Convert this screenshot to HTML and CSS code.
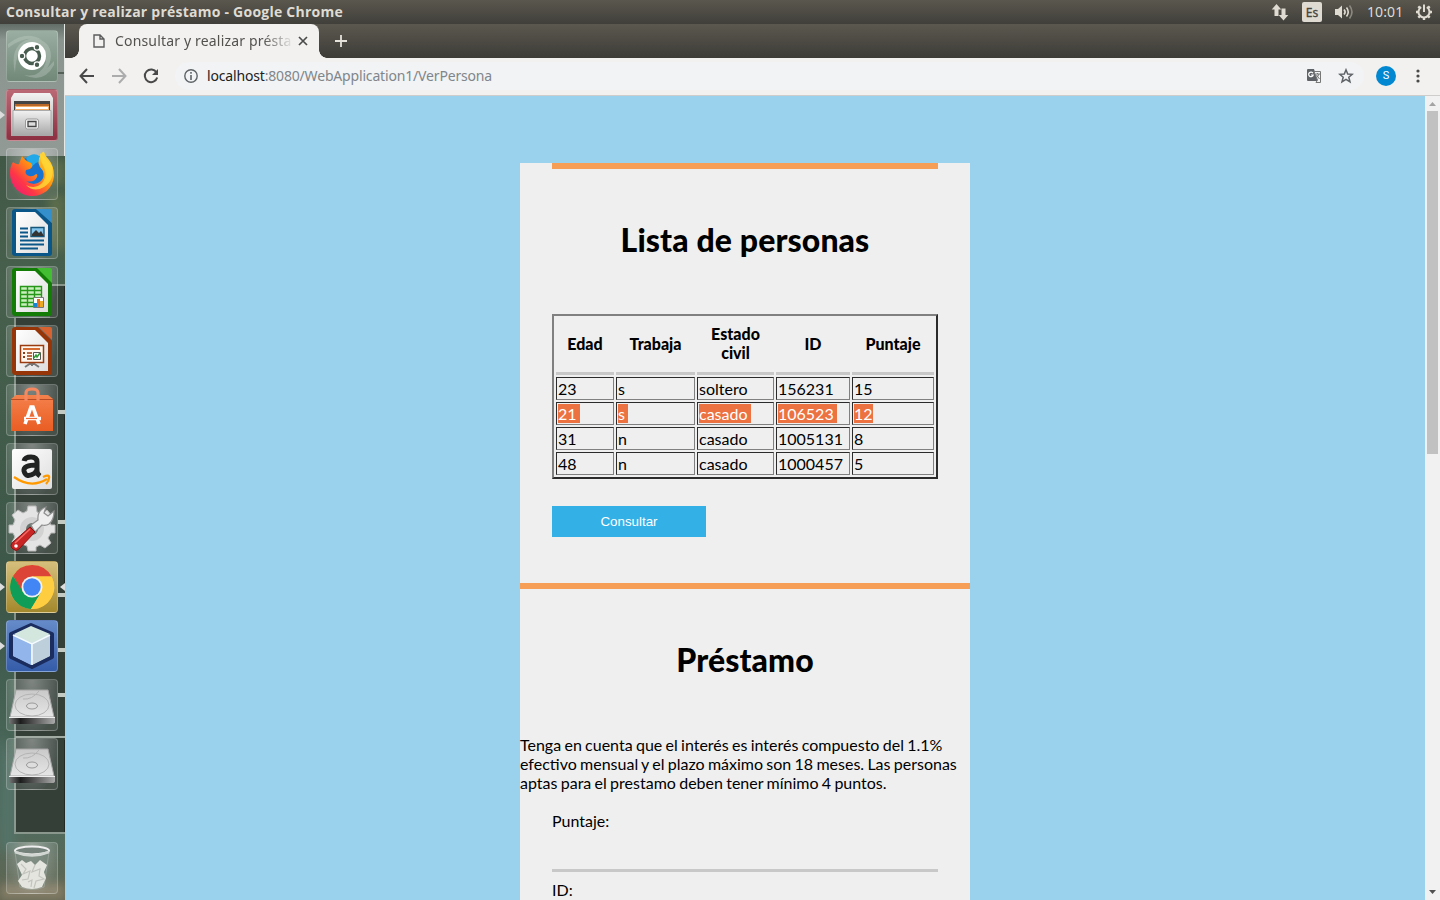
FILE: index.html
```html
<!DOCTYPE html>
<html lang="es">
<head>
<meta charset="utf-8">
<title>Consultar y realizar préstamo</title>
<link rel="stylesheet" href="styles.css">
</head>
<body>
<div class="desktop">
  <header class="panel">
    <span class="panel-title">Consultar y realizar préstamo - Google Chrome</span>
    <div class="indicators">
      <svg class="ind-net" width="18" height="18" viewBox="0 0 18 18"><path d="M5.500 1L10.300 6.500H7.500V13H3.500V6.500H.7ZM12.500 17.500L7.700 12H10.500V5.500H14.500V12H17.300Z"/></svg>
      <span class="lang">Es</span>
      <svg class="ind-sound" width="20" height="18" viewBox="0 0 20 18"><path d="M1 6H4L8 2.500V15.500L4 12H1Z"/><g fill="none" stroke="#dfdbd2" stroke-width="1.600"><path d="M10 6.500Q12.300 9 10 11.500M12.500 4.500Q16 9 12.500 13.500"/><path stroke="#8c8981" d="M15.500 2.500Q20.500 9 15.500 15.500"/></g></svg>
      <span class="clock">10:01</span>
      <svg class="ind-gear" width="18" height="18" viewBox="0 0 18 18"><g fill="none" stroke="#dfdbd2"><path stroke-width="2" d="M6.200 4.200A5.500 5.500 0 1 0 11.800 4.200M9 1.500V9"/><path stroke-width="2.400" d="M1 9H3.500M14.500 9H17M9 14.500V17M3.300 3.300L5 5M14.700 3.300L13 5M3.300 14.700L5 13M14.700 14.700L13 13"/></g></svg>
    </div>
  </header>
  <div class="workspace">
    <aside class="launcher">
      <svg class="wallpaper" width="65" height="876" viewBox="0 24 65 876">
        <defs>
          <linearGradient id="wall" x2="0" y2="1"><stop stop-color="#3d5041"/><stop offset=".3" stop-color="#47604d"/><stop offset=".65" stop-color="#3c5648"/><stop offset=".9" stop-color="#4d6c5f"/><stop offset="1" stop-color="#626552"/></linearGradient>
          <linearGradient id="fog" x2="0" y2="1"><stop stop-color="#626d67"/><stop offset=".12" stop-color="#8b958f"/><stop offset="1" stop-color="#929a96"/></linearGradient>
          <linearGradient id="paper" x2="1" y2="1"><stop stop-color="#fff"/><stop offset="1" stop-color="#dedede"/></linearGradient>
          <linearGradient id="steel" x2="0" y2="1"><stop stop-color="#f2f2f2"/><stop offset="1" stop-color="#a8a8a8"/></linearGradient>
          <linearGradient id="disk" x2="0" y2="1"><stop stop-color="#c9c9c9"/><stop offset="1" stop-color="#e6e6e6"/></linearGradient>
          <linearGradient id="base" x2="1"><stop stop-color="#777"/><stop offset=".25" stop-color="#1d1d1d"/><stop offset="1" stop-color="#aaa"/></linearGradient>
          <linearGradient id="fire" x1="1" x2="0" y2="1"><stop stop-color="#fff44f"/><stop offset=".4" stop-color="#ff980e"/><stop offset=".7" stop-color="#ff3647"/><stop offset="1" stop-color="#e31587"/></linearGradient>
          <linearGradient id="bag" x2="0" y2="1"><stop stop-color="#f5814c"/><stop offset="1" stop-color="#e95d23"/></linearGradient>
          <filter id="soft" x="-30%" y="-30%" width="160%" height="160%"><feGaussianBlur stdDeviation="4"/></filter>
        </defs>
        <path fill="url(#wall)" d="M0 24H65V900H0Z"/>
        <g filter="url(#soft)"><path fill="#5b6d4b" d="M25 160H65V185H40ZM48 195H65V250H50Z"/><path fill="#557267" d="M0 735L16 770V850H0Z"/><path fill="#827b65" d="M0 884H65V900H0Z"/></g>
        <path fill="#343f38" d="M16 318H65V832H16ZM50 286H65V320H50Z"/>
        <path fill="url(#fog)" d="M0 24H64V156H0Z"/>
        <g fill="none" stroke="#a1aba3" stroke-width="2"><path d="M15 318V833H65M50 285H65" opacity=".7"/><path d="M15 737H65"/><path stroke="#c3c9c3" stroke-width="4" d="M58 412H65M58 522H65M58 595H65M58 650H65M58 695H65"/></g>
        <path stroke="#e5e8e4" d="M64.500 24V156"/>
        <path stroke="#222a25" d="M64.500 286V409M64.500 415V519M64.500 550V590M64.500 740V832"/>
        <path stroke="#536159" stroke-width="2" d="M58 73H64"/>
        <path fill="#ddd" d="M0 111L5 115L0 119ZM0 583L5 587L0 591ZM0 642L5 646L0 650ZM65 583L60 587L65 591Z"/>
      </svg>
      <div class="apps">
        <div class="tile ubuntu"><svg viewBox="0 0 52 52"><g fill="#c5d2c9" opacity=".35"><path d="M9 43Q2 12 28 8Q45 11 45 26Q44 42 29 45Q42 38 40 24Q36 12 26 12Q10 15 9 43ZM2 14Q20 0 36 10Q20 5 2 18ZM48 35Q38 54 18 45Q34 48 48 31Z"/></g><circle cx="26" cy="26" r="14" fill="#fff"/><circle cx="26" cy="26" r="7.500" fill="none" stroke="#475b4e" stroke-width="3.500"/><g fill="#475b4e" stroke="#fff" stroke-width="1.200"><circle cx="16" cy="26" r="2.800"/><circle cx="31" cy="17.300" r="2.800"/><circle cx="31" cy="34.700" r="2.800"/></g></svg></div>
        <div class="tile files"><svg viewBox="0 0 52 52"><path fill="url(#steel)" d="M8 4H44L47 9V47H5V9Z"/><path fill="#444" d="M8 12H44V21H8Z"/><path fill="#ba672a" d="M9 15H43V21H9Z"/><path fill="#f3ae69" d="M9 17H43V21H9Z"/><path fill="#fff" d="M10 18H42V20H10Z"/><path fill="url(#steel)" stroke="#aaa" d="M7 21.500H45V46H7Z"/><rect x="19.500" y="30" width="13" height="10" rx="2" fill="#f3f3f3" stroke="#999"/><path fill="#ddd" stroke="#444" stroke-width="1.300" d="M22 32.500H30V37.500H22Z"/></svg></div>
        <div class="tile firefox"><svg viewBox="0 0 52 52"><circle cx="28" cy="25" r="17" fill="#1774d1"/><path fill="#20a8e9" d="M20 10Q31 1 38 14Q31 12 25 20Z"/><path fill="url(#fire)" d="M7 14Q11 17 13 16L16 8Q19 13 25 15Q28 18 24 21L20 22Q18 26 23 28Q27 29 30 26Q32 26 31 29Q28 35 20 33Q28 39 35 33Q39 29 37 23Q29 15 35 6Q37 3 38 4Q39 8 43 12Q48 18 48 28C47 41 37 48 26 48C14 48 4 38 4 25Q4 18 7 14Z"/><path fill="#ffda37" d="M34 5Q34 12 37 17Q42 26 37 34Q30 42 20 37Q28 45 38 39Q49 32 46 18L38 9Z" opacity=".8"/></svg></div>
        <div class="tile"><svg viewBox="0 0 52 52"><path fill="#0b5688" d="M9 2H32L46 16V46Q46 49 43 49H9Q6 49 6 46V5Q6 2 9 2Z"/><path fill="#348fca" d="M30 2H44Q46 2 46 4V16Z"/><path fill="url(#paper)" d="M10 5H29L42 18V46H10Z"/><path stroke="#0b5688" stroke-width="2" d="M14 21.500H22M14 25.500H22M14 29.500H22M14 33.500H38M14 37.500H38M14 41.500H32"/><path fill="#83c5ed" stroke="#175579" stroke-width="1.400" d="M25 20.500H38V29.500H25Z"/><path fill="#333" d="M26 29V27L30 23L33 26L35 24L38 29Z"/></svg></div>
        <div class="tile"><svg viewBox="0 0 52 52"><path fill="#127c06" d="M9 2H32L46 16V46Q46 50 43 50H9Q6 50 6 46V5Q6 2 9 2Z"/><path fill="#43bd32" d="M31 2H44Q46 2 46 4V17Z"/><path fill="url(#paper)" d="M10 5H29L42 18V46H10Z"/><path fill="#c9efbd" stroke="#279719" stroke-width="1.400" d="M14.500 20.500H35.500V40.500H14.500ZM14.500 24.500H35.500M14.500 28.500H35.500M14.500 32.500H35.500M14.500 36.500H35.500M21.500 20.500V40.500M28.500 20.500V40.500"/><path fill="#fff" stroke="#777" d="M27.500 31.500H37.500V41.500H27.500Z"/><path fill="#1684d5" d="M28 37H31V41H28Z"/><path fill="#ee6c14" d="M31 33H34V41H31Z"/><path fill="#eaaa24" d="M34 35H37V41H34Z"/></svg></div>
        <div class="tile"><svg viewBox="0 0 52 52"><path fill="#963508" d="M9 2H32L46 16V46Q46 50 43 50H9Q6 50 6 46V5Q6 2 9 2Z"/><path fill="#d86330" d="M33 2H44Q46 2 46 4V15Z"/><path fill="url(#paper)" d="M10 5H29L42 18V46H10Z"/><path stroke="#777" stroke-width="2" fill="none" d="M26 37V41M25 38L19 42M27 38L33 42"/><path fill="#fff7ed" stroke="#9a3c11" stroke-width="1.500" d="M14.500 20.500H37.500V37.500H14.500Z"/><path stroke="#d66b31" stroke-width="2" d="M17 24H34"/><path stroke="#8b3c17" stroke-width="2" stroke-dasharray="2 2" d="M18 27V35"/><path stroke="#9a3c11" stroke-width="1.500" d="M21 28H26M21 31H26M21 34H26"/><path fill="#fff" stroke="#555" d="M27.500 27.500H34.500V34.500H27.500Z"/><path fill="none" stroke="#319737" stroke-width="1.500" d="M28 33L30 30L31 32L34 28"/></svg></div>
        <div class="tile"><svg viewBox="0 0 52 52"><path fill="url(#bag)" d="M5 15L10 11H42L47 15V47H5Z"/><path stroke="#b84b23" d="M5 15.500H47"/><path fill="none" stroke="#f6885f" stroke-width="3.200" d="M20 17V9Q20 5 26 5Q32 5 32 9V17"/><g fill="none" stroke="#fff" stroke-width="3.600"><path d="M19 40L25 23H27L33 40"/><path stroke-width="3.500" d="M18 34.500H35"/><path stroke="#ed6c38" stroke-width="1.200" d="M20 34.500H31"/></g></svg></div>
        <div class="tile"><svg viewBox="0 0 52 52"><rect x="6" y="6" width="40" height="40" rx="2" fill="url(#paper)"/><path fill="none" stroke="#202322" stroke-width="5" d="M18 18Q19 14 25 14Q31 14 31 19V28Q31 31 34 33M31 22Q17 22 18 28Q20 36 29 30L31 27"/><path fill="none" stroke="#ff9900" stroke-width="2.300" d="M8 34Q25 46 41 36M37 34Q44 31 43 35Q43 38 40 41"/></svg></div>
        <div class="tile"><svg viewBox="0 0 52 52"><path fill="#e4e4e4" stroke="#b8b8b8" d="M22 4H30L31 10L36 12L41 8L46 14L43 19L45 23H49V31H45L42 36L45 41L39 46L34 43L30 45V49H22L21 44L16 42L11 46L6 40L9 35L7 31H3V23H7L9 18L6 13L12 8L17 11L21 9Z"/><circle cx="26" cy="27" r="12" fill="#d2d2d2"/><circle cx="26" cy="27" r="6" fill="#69736d"/><path fill="#eee" stroke="#8e8e8e" stroke-width="1.200" d="M25 23L32 18Q31 8 40 5L38 11L42 14L48 9Q48 18 43 22Q40 24 36 23L29 30Z"/><path fill="#ca2525" stroke="#8c1212" d="M7 40L24 25L29 30L13 47Q10 50 7 47Q3 44 7 40Z"/><path stroke="#f16b64" stroke-width="1.500" d="M9 41L24 27"/><circle cx="10" cy="44" r="1.800" fill="#fff"/></svg></div>
        <div class="tile chrome"><svg viewBox="0 0 52 52"><circle cx="26" cy="26" r="22" fill="#fc4"/><path fill="#db4437" d="M7 15A22 22 0 0 1 45.500 15.500H26L16 31Z"/><path fill="#0f9d58" d="M7 15A22 22 0 0 0 25 48L34.500 32L17 31Z"/><path fill="#ffcd40" d="M26 15.500H45.500A22 22 0 0 1 25 48L35 32Z"/><circle cx="26" cy="26" r="10.500" fill="#f1f1f1"/><circle cx="26" cy="26" r="8.700" fill="#4285f4"/></svg></div>
        <div class="tile netbeans"><svg viewBox="0 0 52 52"><path fill="#c9ddeb" stroke="#1b2c5f" stroke-width="4" stroke-linejoin="round" d="M25 5L46 14V37L26 47L5 37V14Z"/><path fill="#92b5eb" d="M7 15L25 24V45L7 36Z"/><path fill="#d3e7df" d="M25 6L44 14L26 23L8 14Z"/><path fill="#bdcfda" d="M44 16L26 24V45L44 36Z"/><path fill="none" stroke="#f4fbff" stroke-width="1.500" d="M7 15L26 24L44 15M26 24V45"/></svg></div>
        <div class="tile"><svg viewBox="0 0 52 52"><path fill="url(#disk)" stroke="#a5a5a5" d="M10 11H42L48 38H4Z"/><path fill="url(#base)" d="M3 38H49V43Q49 45 46 45H6Q3 45 3 43Z"/><path stroke="#eee" d="M3 38.500H49"/><ellipse cx="26" cy="26" rx="17" ry="11" fill="none" stroke="#b4b4b4"/><ellipse cx="26" cy="27" rx="5.500" ry="3" fill="#ddd" stroke="#999"/><path fill="none" stroke="#b4b4b4" d="M17 20Q26 21 33 12"/></svg></div>
        <div class="tile"><svg viewBox="0 0 52 52"><path fill="url(#disk)" stroke="#a5a5a5" d="M10 11H42L48 38H4Z"/><path fill="url(#base)" d="M3 38H49V43Q49 45 46 45H6Q3 45 3 43Z"/><path stroke="#eee" d="M3 38.500H49"/><ellipse cx="26" cy="26" rx="17" ry="11" fill="none" stroke="#b4b4b4"/><ellipse cx="26" cy="27" rx="5.500" ry="3" fill="#ddd" stroke="#999"/><path fill="none" stroke="#b4b4b4" d="M17 20Q26 21 33 12"/></svg></div>
        <div class="tile trash"><svg viewBox="0 0 52 52"><path fill="#78887f" opacity=".55" stroke="#aab5ae" d="M9 10L14 45Q26 50 38 45L43 10Z"/><path fill="#e5e5df" d="M11 22L16 18L20 21L25 19L29 23L34 18L41 23L38 30L40 36L36 45Q26 49 16 45L12 39L16 33Z"/><path fill="none" stroke="#c2c4bd" stroke-width="1.200" d="M15 22L20 27L17 32L24 29L22 37L16 38M29 23L26 30L34 27L33 34L38 37L30 39L28 46M22 40L26 38L25 45"/><ellipse cx="26" cy="8.500" rx="17" ry="4" fill="#75827b" stroke="#eee" stroke-width="2"/><path fill="none" stroke="#d2d6d3" stroke-width="2.500" d="M9 10Q26 17 43 10"/></svg></div>
      </div>
    </aside>
    <main class="browser">
      <div class="tabstrip">
        <div class="tab">
          <svg width="12" height="14" viewBox="0 0 12 14"><path fill="none" stroke="#5c5c5c" stroke-width="1.400" d="M1 1H7L11 5V13H1ZM7 1V5H11"/></svg>
          <span class="tab-title">Consultar y realizar présta</span>
          <svg width="10" height="10" viewBox="0 0 10 10"><path stroke="#4b4b4b" stroke-width="1.700" d="M1 1L9 9M9 1L1 9"/></svg>
        </div>
        <svg class="newtab" width="12" height="12" viewBox="0 0 12 12"><path stroke="#e5e2dc" stroke-width="1.800" d="M6 0V12M0 6H12"/></svg>
      </div>
      <div class="toolbar">
        <svg width="16" height="16" viewBox="0 0 16 16"><path fill="none" stroke="#494949" stroke-width="2" d="M15 8H2M8 1L1.500 8L8 15"/></svg>
        <svg width="16" height="16" viewBox="0 0 16 16"><path fill="none" stroke="#acacac" stroke-width="2" d="M1 8H14M8 1L14.500 8L8 15"/></svg>
        <svg width="16" height="16" viewBox="0 0 16 16"><path fill="none" stroke="#494949" stroke-width="2" d="M13.500 4.500A6.300 6.300 0 1 0 14.200 9.500"/><path fill="#494949" d="M15 1V7H9Z"/></svg>
        <div class="omnibox">
          <svg width="14" height="14" viewBox="0 0 14 14"><circle cx="7" cy="7" r="6.200" fill="none" stroke="#5f6368" stroke-width="1.400"/><path stroke="#5f6368" stroke-width="1.600" d="M7 3V4.700M7 6V11"/></svg>
          <span class="url"><b>localhost</b>:8080/WebApplication1/VerPersona</span>
          <svg class="translate" width="14" height="14" viewBox="0 0 14 14"><path fill="#5f6368" d="M1 0H7L11 12H1Q0 12 0 11V1Q0 0 1 0Z"/><path fill="#f1f3f4" stroke="#777" d="M7 2.500H13.500V13.500H9L10.500 11Z"/><path fill="none" stroke="#fff" stroke-width="1.200" d="M6 4.300A2.300 2.300 0 1 0 6.200 6H4"/><path fill="none" stroke="#777" d="M8.500 5H13M10.500 4V5M12 5Q11 8 9 9M9.500 6L12.500 10"/></svg>
          <svg width="16" height="16" viewBox="0 0 16 16"><path fill="none" stroke="#5f6368" stroke-width="1.500" d="M8 1.800L9.700 6L14.300 6.300L10.800 9.200L12 13.800L8 11.300L4 13.800L5.200 9.200L1.700 6.300L6.300 6Z"/></svg>
        </div>
        <span class="avatar">S</span>
        <svg class="dots" width="4" height="14" viewBox="0 0 4 14"><g fill="#494949"><circle cx="2" cy="2" r="1.600"/><circle cx="2" cy="7" r="1.600"/><circle cx="2" cy="12" r="1.600"/></g></svg>
      </div>
      <div class="viewport">
        <div class="page">
          <div class="card">
            <section class="people">
              <h1>Lista de personas</h1>
              <table>
                <colgroup><col class="c1"><col class="c2"><col class="c3"><col class="c4"><col class="c5"></colgroup>
                <tr class="head"><th>Edad</th><th>Trabaja</th><th>Estado civil</th><th>ID</th><th>Puntaje</th></tr>
                <tr><td>23</td><td>s</td><td>soltero</td><td>156231</td><td>15</td></tr>
                <tr class="selected"><td><span>21 </span></td><td><span>s </span></td><td><span>casado </span></td><td><span>106523 </span></td><td><span>12</span></td></tr>
                <tr><td>31</td><td>n</td><td>casado</td><td>1005131</td><td>8</td></tr>
                <tr><td>48</td><td>n</td><td>casado</td><td>1000457</td><td>5</td></tr>
              </table>
              <button class="consult">Consultar</button>
            </section>
            <section class="loan">
              <h1>Préstamo</h1>
              <p class="note">Tenga en cuenta que el interés es interés compuesto del 1.1% efectivo mensual y el plazo máximo son 18 meses. Las personas aptas para el prestamo deben tener mínimo 4 puntos.</p>
              <div class="fields">
                <label class="field">Puntaje:</label>
                <label class="field">ID:</label>
              </div>
            </section>
          </div>
        </div>
        <div class="scrollbar">
          <svg width="7" height="4" viewBox="0 0 7 4"><path fill="#a3a3a3" d="M3.500 0L7 4H0Z"/></svg>
          <div class="thumb"></div>
          <svg class="down" width="7" height="4" viewBox="0 0 7 4"><path fill="#505050" d="M3.500 4L0 0H7Z"/></svg>
        </div>
      </div>
    </main>
  </div>
</div>
</body>
</html>
```
FILE: styles.css
```css
* { box-sizing: border-box; }
body { margin: 0; font-family: "Noto Sans", sans-serif; overflow: hidden; }
svg { display: block; flex: none; }
.desktop { width: 1440px; height: 900px; display: flex; flex-direction: column; overflow: hidden; }
.panel { height: 24px; flex: none; display: flex; align-items: center; justify-content: space-between; padding: 0 7px 0 6px; background: linear-gradient(#5a574e, #403f3a); color: #dfdbd2; }
.panel-title { font: bold 14px/22px "Open Sans", sans-serif; letter-spacing: 0.24px; white-space: nowrap; }
.indicators { display: flex; align-items: center; fill: #dfdbd2; }
.ind-net { margin-right: 13px; }
.lang { width: 20px; height: 20px; border-radius: 2px; background: #dfdbd2; color: #464540; font: 12px/21px "Noto Sans", sans-serif; -webkit-text-stroke: .3px #464540; text-align: center; margin-right: 12px; }
.ind-sound { margin-right: 13px; }
.clock { width: 36px; font-size: 14px; line-height: 22px; letter-spacing: 0.1px; margin-right: 12px; }
.workspace { display: flex; flex: 1; min-height: 0; }
.launcher { position: relative; width: 65px; flex: none; }
.wallpaper { position: absolute; left: 0; top: 0; }
.apps { position: relative; height: 100%; display: flex; flex-direction: column; gap: 7px; padding: 6px 7px 6px 6px; }
.tile { width: 52px; height: 52px; flex: none; border-radius: 4px; border: 1px solid #ffffff38; background: radial-gradient(ellipse at 50% 0, #ffffff60, #ffffff18 80%); }
.tile svg { width: 52px; height: 52px; margin: -1px; }
.ubuntu { background: linear-gradient(#9aaea1, #718878); }
.files { background: linear-gradient(#ba6975, #8c2f41); }
.chrome { background: linear-gradient(#d5bf7c, #a4882c); }
.netbeans { background: linear-gradient(#658bc9, #355ca8); }
.trash { margin-top: auto; }
.browser { flex: 1; min-width: 0; display: flex; flex-direction: column; }
.tabstrip { height: 34px; flex: none; display: flex; align-items: flex-start; padding-left: 14px; background: linear-gradient(#5b584f, #3d3c37); }
.tab { position: relative; width: 240px; height: 34px; border-radius: 8px 8px 0 0; background: #f2f1f0; display: flex; align-items: center; padding: 0 11px 0 14px; }
.tab::before, .tab::after { content: ""; position: absolute; bottom: 0; width: 8px; height: 8px; }
.tab::before { left: -8px; background: radial-gradient(circle at 0 0, transparent 7.5px, #f2f1f0 8px); }
.tab::after { right: -8px; background: radial-gradient(circle at 100% 0, transparent 7.5px, #f2f1f0 8px); }
.tab-title { width: 177px; margin: 0 6px 0 10px; white-space: nowrap; font-size: 14px; line-height: 20px; letter-spacing: 0.17px; color: #54524e; mask-image: linear-gradient(90deg, #000 148px, transparent 179px); }
.newtab { margin: 11px 0 0 16px; }
.toolbar { height: 38px; flex: none; display: flex; align-items: center; gap: 16px; padding: 0 20px 2px 14px; border-bottom: 1px solid #cfcdcb; background: #f2f1f0; }
.omnibox { flex: 1; height: 28px; border-radius: 14px; background: #f1f3f4; display: flex; align-items: center; padding: 0 10px 0 9px; }
.url { flex: 1; margin: 1px 0 0 9px; font-size: 14px; line-height: 20px; letter-spacing: -0.17px; color: #80868b; }
.url b { font-weight: 400; color: #202124; }
.translate { margin-right: 17px; }
.avatar { width: 20px; height: 20px; margin-left: -4px; border-radius: 50%; background: #0288d1; color: #fff; font: 11px/20px Roboto, sans-serif; text-align: center; }
.dots { margin-left: 4px; }
.viewport { flex: 1; min-height: 0; display: flex; }
.page { flex: 1; background: #9ad2ed; padding-top: 67px; overflow: hidden; font: 16px/19px Lato, sans-serif; word-spacing: -0.8px; color: #000; }
.card { width: 450px; height: 800px; margin: 0 auto; background: #efefef; }
.people { height: 420px; margin: 0 32px; border-top: 6px solid #f69d56; padding-top: 52px; }
h1 { margin: 0; font: 900 32px/38px Lato, sans-serif; letter-spacing: 0.1px; word-spacing: 0; text-align: center; }
table { width: 386px; table-layout: fixed; border-collapse: separate; border-spacing: 2px; border: 2px solid; border-color: #808080 #2b2b2b #2b2b2b #808080; margin-top: 55px; }
td { height: 23px; padding: 1px; border: 1px solid; border-color: #2b2b2b #808080 #808080 #2b2b2b; }
th { height: 57px; padding: 5px 10px 9px; border: 0; border-bottom: 3px solid #c8c8c8; font-weight: 900; }
.c1 { width: 58px; }
.c2 { width: 79px; }
.c3 { width: 77px; }
.c4 { width: 74px; }
.c5 { width: 82px; }
.selected span { display: inline-block; white-space: pre; height: 19px; vertical-align: top; background: #ec7241; color: #fff; }
.consult { display: block; width: 154px; height: 31px; margin-top: 27px; padding: 0; border: 0; background: #33b0e6; color: #fff; font: 13.333px "Liberation Sans", Arial, sans-serif; }
.loan { border-top: 6px solid #f69d56; padding-top: 52px; }
.note { margin: 56px 0 19px; }
.fields { margin: 0 32px; }
.field { display: block; height: 61px; border-bottom: 3px solid #c8c8c8; margin-bottom: 8px; }
.scrollbar { width: 15px; background: #f1f1f1; display: flex; flex-direction: column; align-items: center; padding: 6px 0; }
.thumb { width: 11px; height: 343px; margin-top: 5px; background: #c1c1c1; }
.down { margin-top: auto; }
```
